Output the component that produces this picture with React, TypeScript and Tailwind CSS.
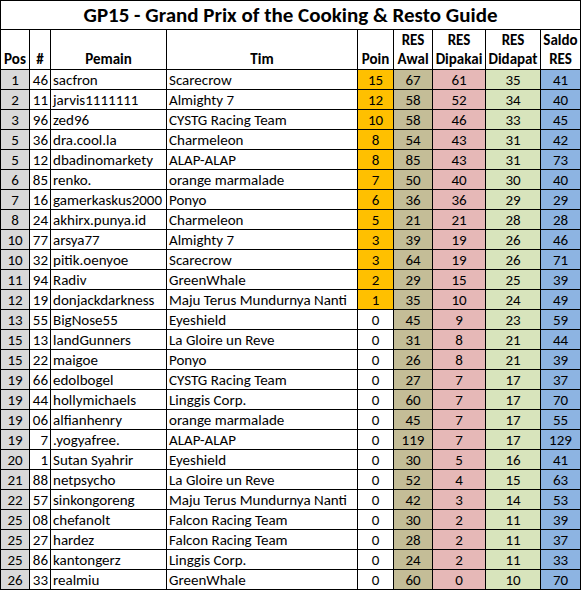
type Row = [string, string, string, string, string, string, string, string, string]

const ROWS: Row[] = [
  ['1', '46', 'sacfron', 'Scarecrow', '15', '67', '61', '35', '41'],
  ['2', '11', 'jarvis1111111', 'Almighty 7', '12', '58', '52', '34', '40'],
  ['3', '96', 'zed96', 'CYSTG Racing Team', '10', '58', '46', '33', '45'],
  ['5', '36', 'dra.cool.la', 'Charmeleon', '8', '54', '43', '31', '42'],
  ['5', '12', 'dbadinomarkety', 'ALAP-ALAP', '8', '85', '43', '31', '73'],
  ['6', '85', 'renko.', 'orange marmalade', '7', '50', '40', '30', '40'],
  ['7', '16', 'gamerkaskus2000', 'Ponyo', '6', '36', '36', '29', '29'],
  ['8', '24', 'akhirx.punya.id', 'Charmeleon', '5', '21', '21', '28', '28'],
  ['10', '77', 'arsya77', 'Almighty 7', '3', '39', '19', '26', '46'],
  ['10', '32', 'pitik.oenyoe', 'Scarecrow', '3', '64', '19', '26', '71'],
  ['11', '94', 'Radiv', 'GreenWhale', '2', '29', '15', '25', '39'],
  ['12', '19', 'donjackdarkness', 'Maju Terus Mundurnya Nanti', '1', '35', '10', '24', '49'],
  ['13', '55', 'BigNose55', 'Eyeshield', '0', '45', '9', '23', '59'],
  ['15', '13', 'landGunners', 'La Gloire un Reve', '0', '31', '8', '21', '44'],
  ['15', '22', 'maigoe', 'Ponyo', '0', '26', '8', '21', '39'],
  ['19', '66', 'edolbogel', 'CYSTG Racing Team', '0', '27', '7', '17', '37'],
  ['19', '44', 'hollymichaels', 'Linggis Corp.', '0', '60', '7', '17', '70'],
  ['19', '06', 'alfianhenry', 'orange marmalade', '0', '45', '7', '17', '55'],
  ['19', '7', '.yogyafree.', 'ALAP-ALAP', '0', '119', '7', '17', '129'],
  ['20', '1', 'Sutan Syahrir', 'Eyeshield', '0', '30', '5', '16', '41'],
  ['21', '88', 'netpsycho', 'La Gloire un Reve', '0', '52', '4', '15', '63'],
  ['22', '57', 'sinkongoreng', 'Maju Terus Mundurnya Nanti', '0', '42', '3', '14', '53'],
  ['25', '08', 'chefanolt', 'Falcon Racing Team', '0', '30', '2', '11', '39'],
  ['25', '27', 'hardez', 'Falcon Racing Team', '0', '28', '2', '11', '37'],
  ['25', '86', 'kantongerz', 'Linggis Corp.', '0', '24', '2', '11', '33'],
  ['26', '33', 'realmiu', 'GreenWhale', '0', '60', '0', '10', '70'],
]

const cell = 'border-r border-b border-black h-[20px] pt-[1px] flex items-center overflow-hidden whitespace-nowrap'
const head = 'border-r border-b border-black h-[40px] flex flex-col items-center justify-end leading-[19px] font-bold'

function Header({ lines }: { lines: string[] }) {
  return (
    <div className={head}>
      {lines.map(l => <span key={l}>{l}</span>)}
    </div>
  )
}

export default function App() {
  return (
    <div className="w-[581px] h-[591px] bg-white text-black text-[15px]" style={{ fontFamily: "Carlito, Calibri, 'Liberation Sans Narrow', 'Open Sans', sans-serif" }}>
      <div className="grid grid-cols-[29px_21px_116px_191px_36px_39px_53px_55px_40px] border-l border-t border-black">
        <div className="col-span-9 border-r border-b border-black h-[29px] pt-[2px] flex items-center justify-center text-[21px] font-bold">
          GP15 - Grand Prix of the Cooking &amp; Resto Guide
        </div>
        <Header lines={['Pos']} />
        <Header lines={['#']} />
        <Header lines={['Pemain']} />
        <Header lines={['Tim']} />
        <Header lines={['Poin']} />
        <Header lines={['RES', 'Awal']} />
        <Header lines={['RES', 'Dipakai']} />
        <Header lines={['RES', 'Didapat']} />
        <Header lines={['Saldo', 'RES']} />
        {ROWS.map((r, i) => {
          const scored = Number(r[4]) > 0
          return [
            <div key={i + 'a'} className={`${cell} justify-center bg-[#d9d9d9]`}>{r[0]}</div>,
            <div key={i + 'b'} className={`${cell} justify-end pr-[2px]`}>{r[1]}</div>,
            <div key={i + 'c'} className={`${cell} pl-[2px]`}>{r[2]}</div>,
            <div key={i + 'd'} className={`${cell} pl-[2px]`}>{r[3]}</div>,
            <div key={i + 'e'} className={`${cell} justify-center ${scored ? 'bg-[#ffc000]' : ''}`}>{r[4]}</div>,
            <div key={i + 'f'} className={`${cell} justify-center bg-[#c4bd97]`}>{r[5]}</div>,
            <div key={i + 'g'} className={`${cell} justify-center bg-[#e6b8b7]`}>{r[6]}</div>,
            <div key={i + 'h'} className={`${cell} justify-center bg-[#d8e4bc]`}>{r[7]}</div>,
            <div key={i + 'i'} className={`${cell} justify-center bg-[#8db4e2]`}>{r[8]}</div>,
          ]
        })}
      </div>
    </div>
  )
}
